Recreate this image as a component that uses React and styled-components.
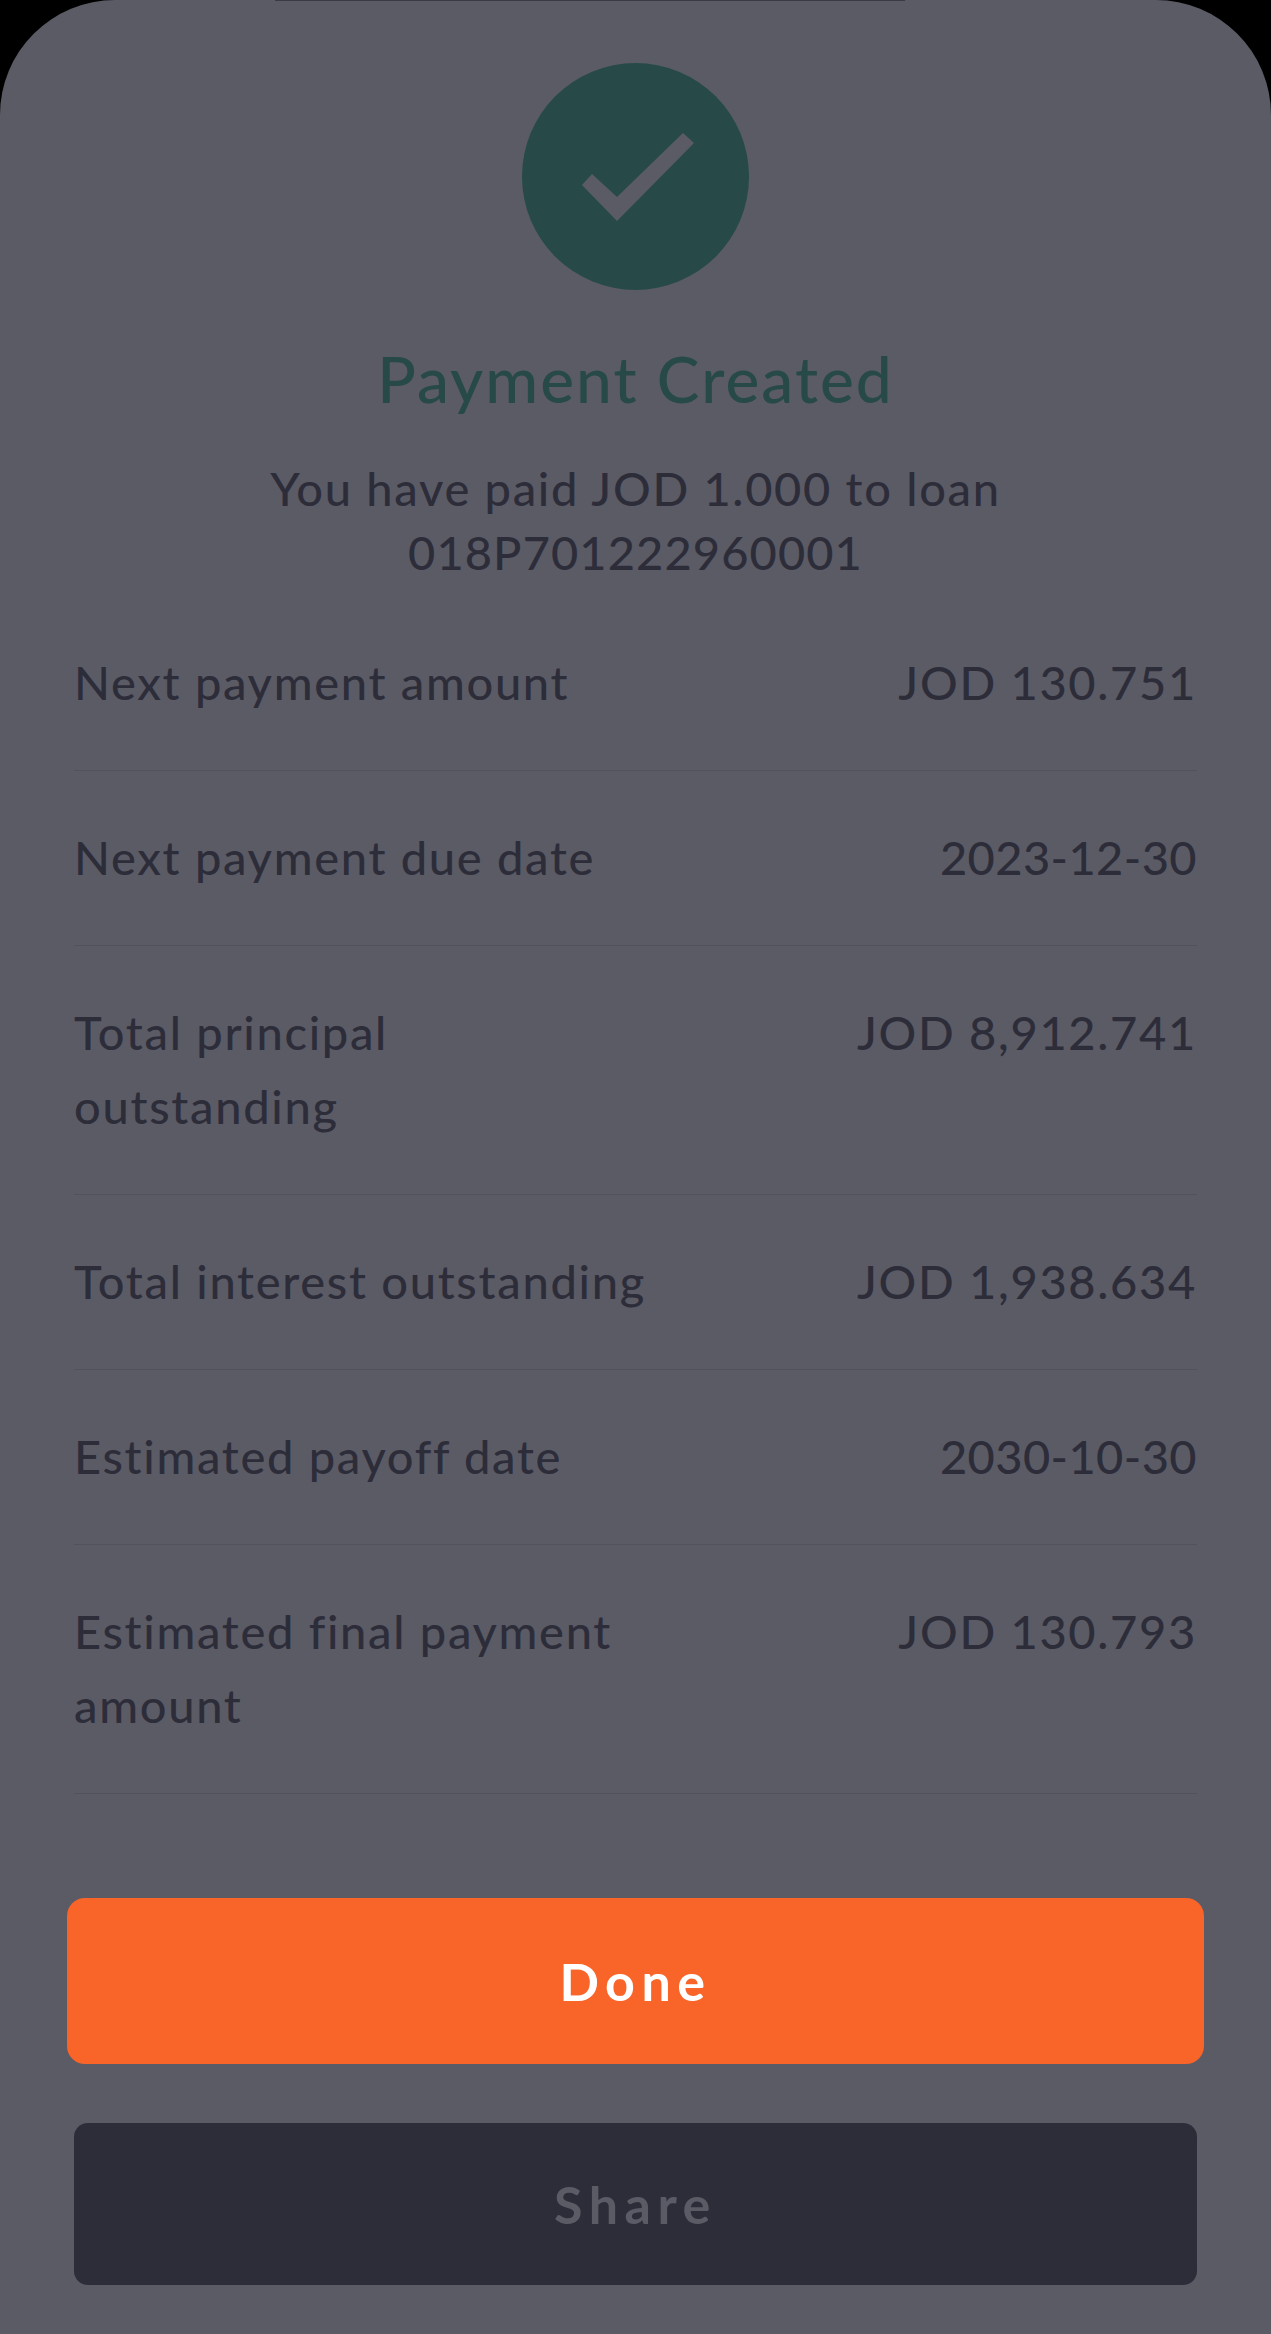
import React from "react";
import styled, { createGlobalStyle } from "styled-components";

const GlobalStyle = createGlobalStyle`
  html, body {
    margin: 0;
    padding: 0;
    background: #000;
  }
  * {
    box-sizing: border-box;
  }
`;

const Sheet = styled.div`
  position: relative;
  width: 1271px;
  height: 2334px;
  background: #5b5b66;
  border-radius: 115px 115px 0 0;
  padding-top: 63px;
  font-family: Lato, "Liberation Sans", sans-serif;
  font-weight: 500;
  color: #2d2d3a;
  display: flex;
  flex-direction: column;
  overflow: hidden;

  /* thin dark edge left over from the screen behind the sheet */
  &::before {
    content: "";
    position: absolute;
    top: 0;
    left: 275px;
    width: 630px;
    height: 1px;
    background: #3a3a46;
  }
`;

const Badge = styled.div`
  width: 227px;
  height: 227px;
  border-radius: 50%;
  background: #274a49;
  margin: 0 auto;
  flex: none;
  display: flex;
  align-items: center;
  justify-content: center;
`;

const Title = styled.h1`
  margin: 49px 0 0;
  font-size: 64px;
  line-height: 80px;
  font-weight: 500;
  letter-spacing: 2px;
  text-align: center;
  color: #274a49;
`;

const Subtitle = styled.p`
  margin: 37px auto 0;
  width: 800px;
  font-size: 47px;
  line-height: 64px;
  letter-spacing: 1.7px;
  text-align: center;
`;

const LoanNumber = styled.span`
  letter-spacing: 1.1px;
`;

const List = styled.div`
  margin: 0 74px;
  padding-top: 12px;
`;

const Row = styled.div`
  display: flex;
  justify-content: space-between;
  align-items: flex-start;
  padding: 49px 0 51px;
  border-bottom: 1px solid #52525e;
  font-size: 47px;
  line-height: 74px;
  letter-spacing: 1.7px;
`;

const Label = styled.div`
  width: 575px;
`;

const Value = styled.div`
  text-align: right;
  letter-spacing: ${(p) => (p.$date ? "0.4px" : "1.7px")};
`;

const Actions = styled.div`
  margin-top: 104px;
  display: flex;
  flex-direction: column;
  align-items: center;
  gap: 59px;
`;

const Button = styled.button`
  display: block;
  border: 0;
  padding: 0;
  width: ${(p) => (p.$primary ? "1137px" : "1123px")};
  height: ${(p) => (p.$primary ? "166px" : "162px")};
  border-radius: ${(p) => (p.$primary ? "18px" : "14px")};
  background: ${(p) => (p.$primary ? "#f96529" : "#2d2d3a")};
  color: ${(p) => (p.$primary ? "#ffffff" : "#5b5b66")};
  font-family: inherit;
  font-size: 52px;
  font-weight: 700;
  letter-spacing: 6.5px;
`;

const rows = [
  { label: "Next payment amount", value: "JOD 130.751" },
  { label: "Next payment due date", value: "2023-12-30", date: true },
  { label: "Total principal outstanding", value: "JOD 8,912.741" },
  { label: "Total interest outstanding", value: "JOD 1,938.634" },
  { label: "Estimated payoff date", value: "2030-10-30", date: true },
  { label: "Estimated final payment amount", value: "JOD 130.793" },
];

export default function App() {
  return (
    <>
      <GlobalStyle />
      <Sheet>
        <Badge>
          <svg width="227" height="227" viewBox="0 0 227 227">
            <path d="M60 122 L70 111 L95 134 L161 70 L172 80 L95 158 Z" fill="#5b5b66" />
          </svg>
        </Badge>
        <Title>Payment Created</Title>
        <Subtitle>
          You have paid JOD 1.000 to loan
          <br />
          <LoanNumber>018P701222960001</LoanNumber>
        </Subtitle>
        <List>
          {rows.map((row) => (
            <Row key={row.label}>
              <Label>{row.label}</Label>
              <Value $date={row.date}>{row.value}</Value>
            </Row>
          ))}
        </List>
        <Actions>
          <Button $primary>Done</Button>
          <Button>Share</Button>
        </Actions>
      </Sheet>
    </>
  );
}
